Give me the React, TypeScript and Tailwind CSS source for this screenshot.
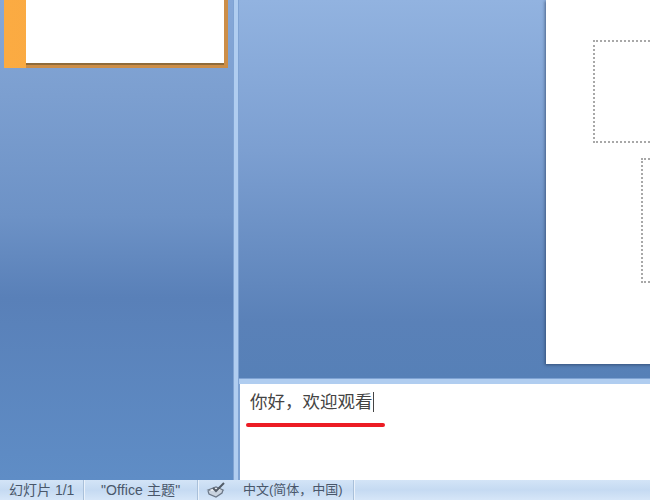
import React from "react";

const font = { fontFamily: '"Liberation Sans", "Noto Sans CJK SC", sans-serif' };

function SpellIcon() {
  return (
    <svg width="22" height="18" viewBox="0 0 22 18" className="block">
      <path d="M2 9 L10 13 L17 9 L10 6 Z" fill="#f4f7fb" stroke="#6a7686" strokeWidth="1.2" />
      <path d="M2 10 L3 13 L10 16 L16 12 L17 9" fill="#c9d3df" stroke="#6a7686" strokeWidth="1.2" />
      <path d="M7 7 L10 10 L18 2" fill="none" stroke="#525c68" strokeWidth="2" />
    </svg>
  );
}

function Divider() {
  return <div className="h-full w-[2px] border-l border-r border-l-[#a9c0da] border-r-[#eaf2fb]" />;
}

export default function App() {
  return (
    <div className="flex h-[500px] w-[650px] flex-col overflow-hidden bg-white" style={font}>
      <div className="flex min-h-0 flex-1">
        {/* slide thumbnails */}
        <div className="w-[233px] bg-[linear-gradient(#86a8d8_0%,#7c9fd0_20%,#6d92c6_45%,#5980b8_62%,#5f8dc6_100%)] pl-[4px]">
          <div className="h-[68px] w-[224px] overflow-hidden bg-[linear-gradient(90deg,#fbab42_0%,#f5a546_100%)] pl-[22px]">
            <div className="h-[63px] w-[198px] bg-white shadow-[0_2px_0_#8f6b3a,0_5px_0_#cc8e48,4px_5px_0_#cc8e48,4px_0_0_#cc8e48]" />
          </div>
        </div>
        <div className="w-[6px] border-x border-[#7fa3d3] bg-[#b0cdf0]" />
        {/* editor column */}
        <div className="flex min-w-0 flex-1 flex-col">
          <div className="h-[378px] overflow-hidden bg-[linear-gradient(#92b3e0_0%,#7c9fd1_40%,#5a81b8_85%,#5680b7_100%)] pl-[307px]">
            <div className="h-[364px] w-[200px] overflow-hidden bg-white pt-[40px] pl-[47px] shadow-[-1px_1px_3px_rgba(30,50,80,0.6)]">
              <div className="h-[103px] w-[180px] border-2 border-dotted border-[#a8a8a8]" />
              <div className="mt-[15px] ml-[48px] h-[125px] w-[100px] border-2 border-dotted border-[#a8a8a8]" />
            </div>
          </div>
          <div className="h-[6px] border-t border-[#7fa3d3] bg-[#b0cdf0]" />
          <div className="flex-1 border-l border-[#7fa3d3] bg-white pl-[10px] pt-[8px]">
            <div className="flex h-[20px] items-center text-[17.5px] leading-[20px] text-[#444]">
              <span>你好，欢迎观看</span>
              <span className="h-[20px] w-px bg-[#444]" />
            </div>
            <div className="mt-[11px] ml-[-4px] h-[4px] w-[139px] rounded-full bg-[#ec1c24]" />
          </div>
        </div>
      </div>
      {/* status bar */}
      <div className="flex h-[20px] items-center bg-[linear-gradient(#d3e4f7,#c5daf2_50%,#d6e6f8)] text-[13px] text-[#49576a]">
        <div className="flex h-full w-[83px] items-center pl-[9px] text-[14px]">幻灯片 1/1</div>
        <Divider />
        <div className="flex h-full w-[112px] items-center pl-[16px] text-[14px] tracking-[0.1px]">"Office 主题"</div>
        <Divider />
        <div className="flex h-full w-[36px] items-center pl-[7px]">
          <SpellIcon />
        </div>
        <div className="flex h-full w-[118px] items-center whitespace-nowrap pl-[8px]">中文(简体，中国)</div>
        <Divider />
      </div>
    </div>
  );
}
